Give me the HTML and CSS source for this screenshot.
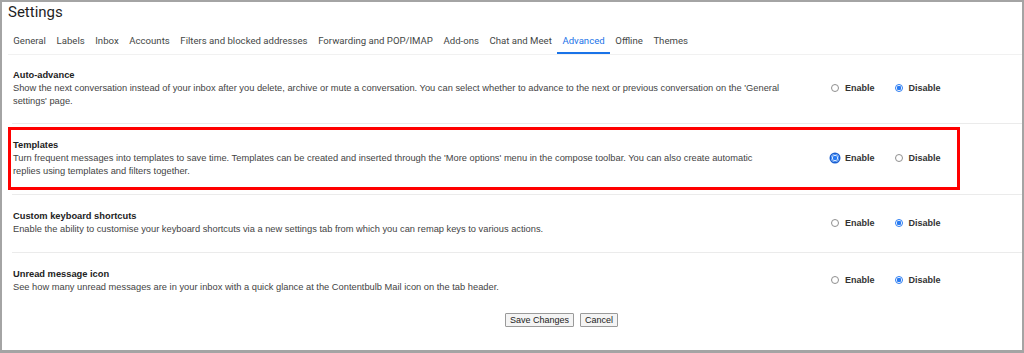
FILE: index.html
```html
<!DOCTYPE html>
<html lang="en">
<head>
    <meta charset="UTF-8">
    <title>Settings</title>
    <link rel="stylesheet" href="styles.css">
</head>
<body>
    <div class="frame">
        <h1 class="page-title">Settings</h1>

        <!-- Tabs -->
        <nav class="tabs">
            <span class="tab">General</span>
            <span class="tab">Labels</span>
            <span class="tab">Inbox</span>
            <span class="tab">Accounts</span>
            <span class="tab">Filters and blocked addresses</span>
            <span class="tab">Forwarding and POP/IMAP</span>
            <span class="tab">Add-ons</span>
            <span class="tab">Chat and Meet</span>
            <span class="tab active">Advanced</span>
            <span class="tab">Offline</span>
            <span class="tab">Themes</span>
        </nav>

        <!-- Settings rows -->
        <div class="settings">
            <div class="row first">
                <div class="info">
                    <div class="label">Auto-advance</div>
                    <div class="desc">Show the next conversation instead of your inbox after you delete, archive or mute a conversation. You can select whether to advance to the next or previous conversation on the 'General settings' page.</div>
                </div>
                <div class="choices">
                    <label class="choice"><span class="radio"></span>Enable</label>
                    <label class="choice"><span class="radio on"></span>Disable</label>
                </div>
            </div>

            <div class="row highlighted">
                <div class="info">
                    <div class="label">Templates</div>
                    <div class="desc">Turn frequent messages into templates to save time. Templates can be created and inserted through the 'More options' menu in the compose toolbar. You can also create automatic replies using templates and filters together.</div>
                </div>
                <div class="choices">
                    <label class="choice"><span class="radio on focus"></span>Enable</label>
                    <label class="choice"><span class="radio"></span>Disable</label>
                </div>
                <div class="red-box"></div>
            </div>

            <div class="row">
                <div class="info">
                    <div class="label">Custom keyboard shortcuts</div>
                    <div class="desc">Enable the ability to customise your keyboard shortcuts via a new settings tab from which you can remap keys to various actions.</div>
                </div>
                <div class="choices">
                    <label class="choice"><span class="radio"></span>Enable</label>
                    <label class="choice"><span class="radio on"></span>Disable</label>
                </div>
            </div>

            <div class="row last">
                <div class="info">
                    <div class="label">Unread message icon</div>
                    <div class="desc">See how many unread messages are in your inbox with a quick glance at the Contentbulb Mail icon on the tab header.</div>
                </div>
                <div class="choices">
                    <label class="choice"><span class="radio"></span>Enable</label>
                    <label class="choice"><span class="radio on"></span>Disable</label>
                </div>
            </div>
        </div>

        <div class="actions">
            <button class="btn">Save Changes</button>
            <button class="btn">Cancel</button>
        </div>
    </div>
</body>
</html>
```

FILE: styles.css
```css
/* General */
body {
    margin: 0;
    padding: 0;
    background: #fff;
    font-family: 'Liberation Sans', Arial, sans-serif;
    color: #202124;
}

.frame {
    height: 353px;
    box-sizing: border-box;
    border: 2px solid #a4a4a4;
    border-bottom-width: 3px;
    overflow: hidden;
}

.page-title {
    margin: 1px 0 0 6px;
    font-family: Roboto, sans-serif;
    font-size: 15px;
    font-weight: 400;
    line-height: 18px;
    color: #1f1f1f;
}

/* Tabs */
.tabs {
    display: flex;
    margin: 7px 0 0 6px;
    border-bottom: 1px solid #f1f1f1;
    font-family: Roboto, sans-serif;
    font-size: 9.6px;
}

.tab {
    padding: 7px 5.3px 5px;
    line-height: 12px;
    color: #444746;
    border-bottom: 2px solid transparent;
}

.tab.active {
    color: #1a73e8;
    border-bottom-color: #1a73e8;
}

/* Rows */
.settings {
    margin-left: 10px;
}

.row {
    position: relative;
    display: grid;
    grid-template-columns: 818px auto;
    align-items: center;
    padding: 15px 0 16px 1px;
    border-bottom: 1px solid #ebebeb;
}

.row.first {
    padding-top: 14px;
}

.row.highlighted {
    padding-bottom: 17px;
}

.row.last {
    border-bottom: none;
}

.label {
    font-size: 9.3px;
    font-weight: bold;
    line-height: 13px;
    color: #222;
}

.desc {
    max-width: 768px;
    font-size: 9.3px;
    line-height: 12.5px;
    color: #444;
}

.choices {
    display: flex;
    gap: 20px;
}

.choice {
    display: flex;
    align-items: center;
    gap: 6px;
    font-size: 9px;
    font-weight: bold;
    color: #333;
}

.radio {
    width: 8px;
    height: 8px;
    box-sizing: border-box;
    border: 1px solid #8f8f8f;
    border-radius: 50%;
    background: #fff;
}

.radio.on {
    border: 1.5px solid #2a7cf2;
    background: radial-gradient(circle, #2a7cf2 0 2px, #fff 2.5px);
}

.radio.focus {
    box-shadow: 0 0 0 1.5px #1a5fd0;
}

/* Annotation box */
.red-box {
    position: absolute;
    left: -4px;
    top: 3px;
    width: 952px;
    height: 63px;
    box-sizing: border-box;
    border: 3px solid #f00;
}

/* Buttons */
.actions {
    display: flex;
    gap: 6px;
    padding-left: 503px;
    margin-top: 4px;
}

.btn {
    height: 14px;
    padding: 0 4px;
    font-family: 'Liberation Sans', Arial, sans-serif;
    font-size: 9px;
    color: #222;
    background: #f4f4f4;
    border: 1px solid #9a9a9a;
    border-radius: 1px;
}
```
